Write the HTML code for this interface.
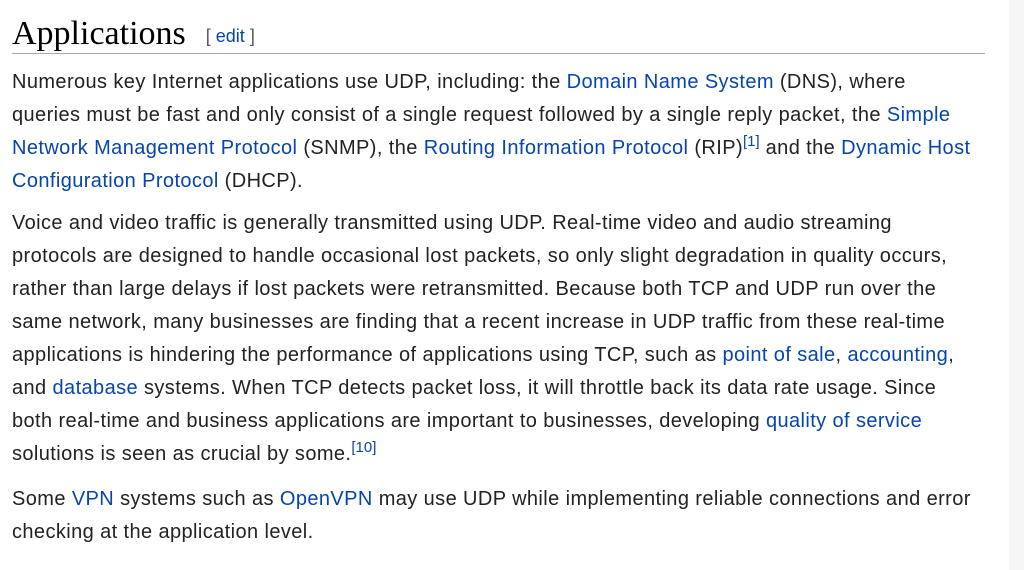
<!DOCTYPE html>
<html><head><meta charset="utf-8"><style>
body{margin:0;background:#fff;width:1024px;height:570px;overflow:hidden;position:relative;font-family:"Liberation Sans",sans-serif;color:#222}
.side{position:absolute;left:1009px;top:0;width:15px;height:570px;background:#f6f6f6}
.c{position:absolute;left:12px;top:0;width:973px}
h2{font-family:"Liberation Serif",serif;font-weight:normal;font-size:34px;margin:0;padding-top:14px;height:39px;line-height:39px;border-bottom:1px solid #a2a9b1;color:#000}
.ed{font-family:"Liberation Sans",sans-serif;font-size:18px;color:#54595d;margin-left:20px;vertical-align:2px}
a{color:#0645ad;text-decoration:none}
p{font-size:20px;line-height:33px;margin:0 0 9px 0;white-space:nowrap;letter-spacing:0.4px}
sup{font-size:15px;line-height:0;vertical-align:8px;letter-spacing:0}
</style></head><body>
<div class="side"></div>
<div class="c">
<h2>Applications<span class="ed">[ <a>edit</a> ]</span></h2>
<p style="margin-top:12px">Numerous key Internet applications use UDP, including: the <a>Domain Name System</a> (DNS), where<br>queries must be fast and only consist of a single request followed by a single reply packet, the <a>Simple</a><br><a>Network Management Protocol</a> (SNMP), the <a>Routing Information Protocol</a> (RIP)<sup><a>[1]</a></sup> and the <a>Dynamic Host</a><br><a>Configuration Protocol</a> (DHCP).</p>
<p style="margin-bottom:12px">Voice and video traffic is generally transmitted using UDP. Real-time video and audio streaming<br>protocols are designed to handle occasional lost packets, so only slight degradation in quality occurs,<br>rather than large delays if lost packets were retransmitted. Because both TCP and UDP run over the<br>same network, many businesses are finding that a recent increase in UDP traffic from these real-time<br>applications is hindering the performance of applications using TCP, such as <a>point of sale</a>, <a>accounting</a>,<br>and <a>database</a> systems. When TCP detects packet loss, it will throttle back its data rate usage. Since<br>both real-time and business applications are important to businesses, developing <a>quality of service</a><br>solutions is seen as crucial by some.<sup><a>[10]</a></sup></p>
<p>Some <a>VPN</a> systems such as <a>OpenVPN</a> may use UDP while implementing reliable connections and error<br>checking at the application level.</p>
</div>
</body></html>
